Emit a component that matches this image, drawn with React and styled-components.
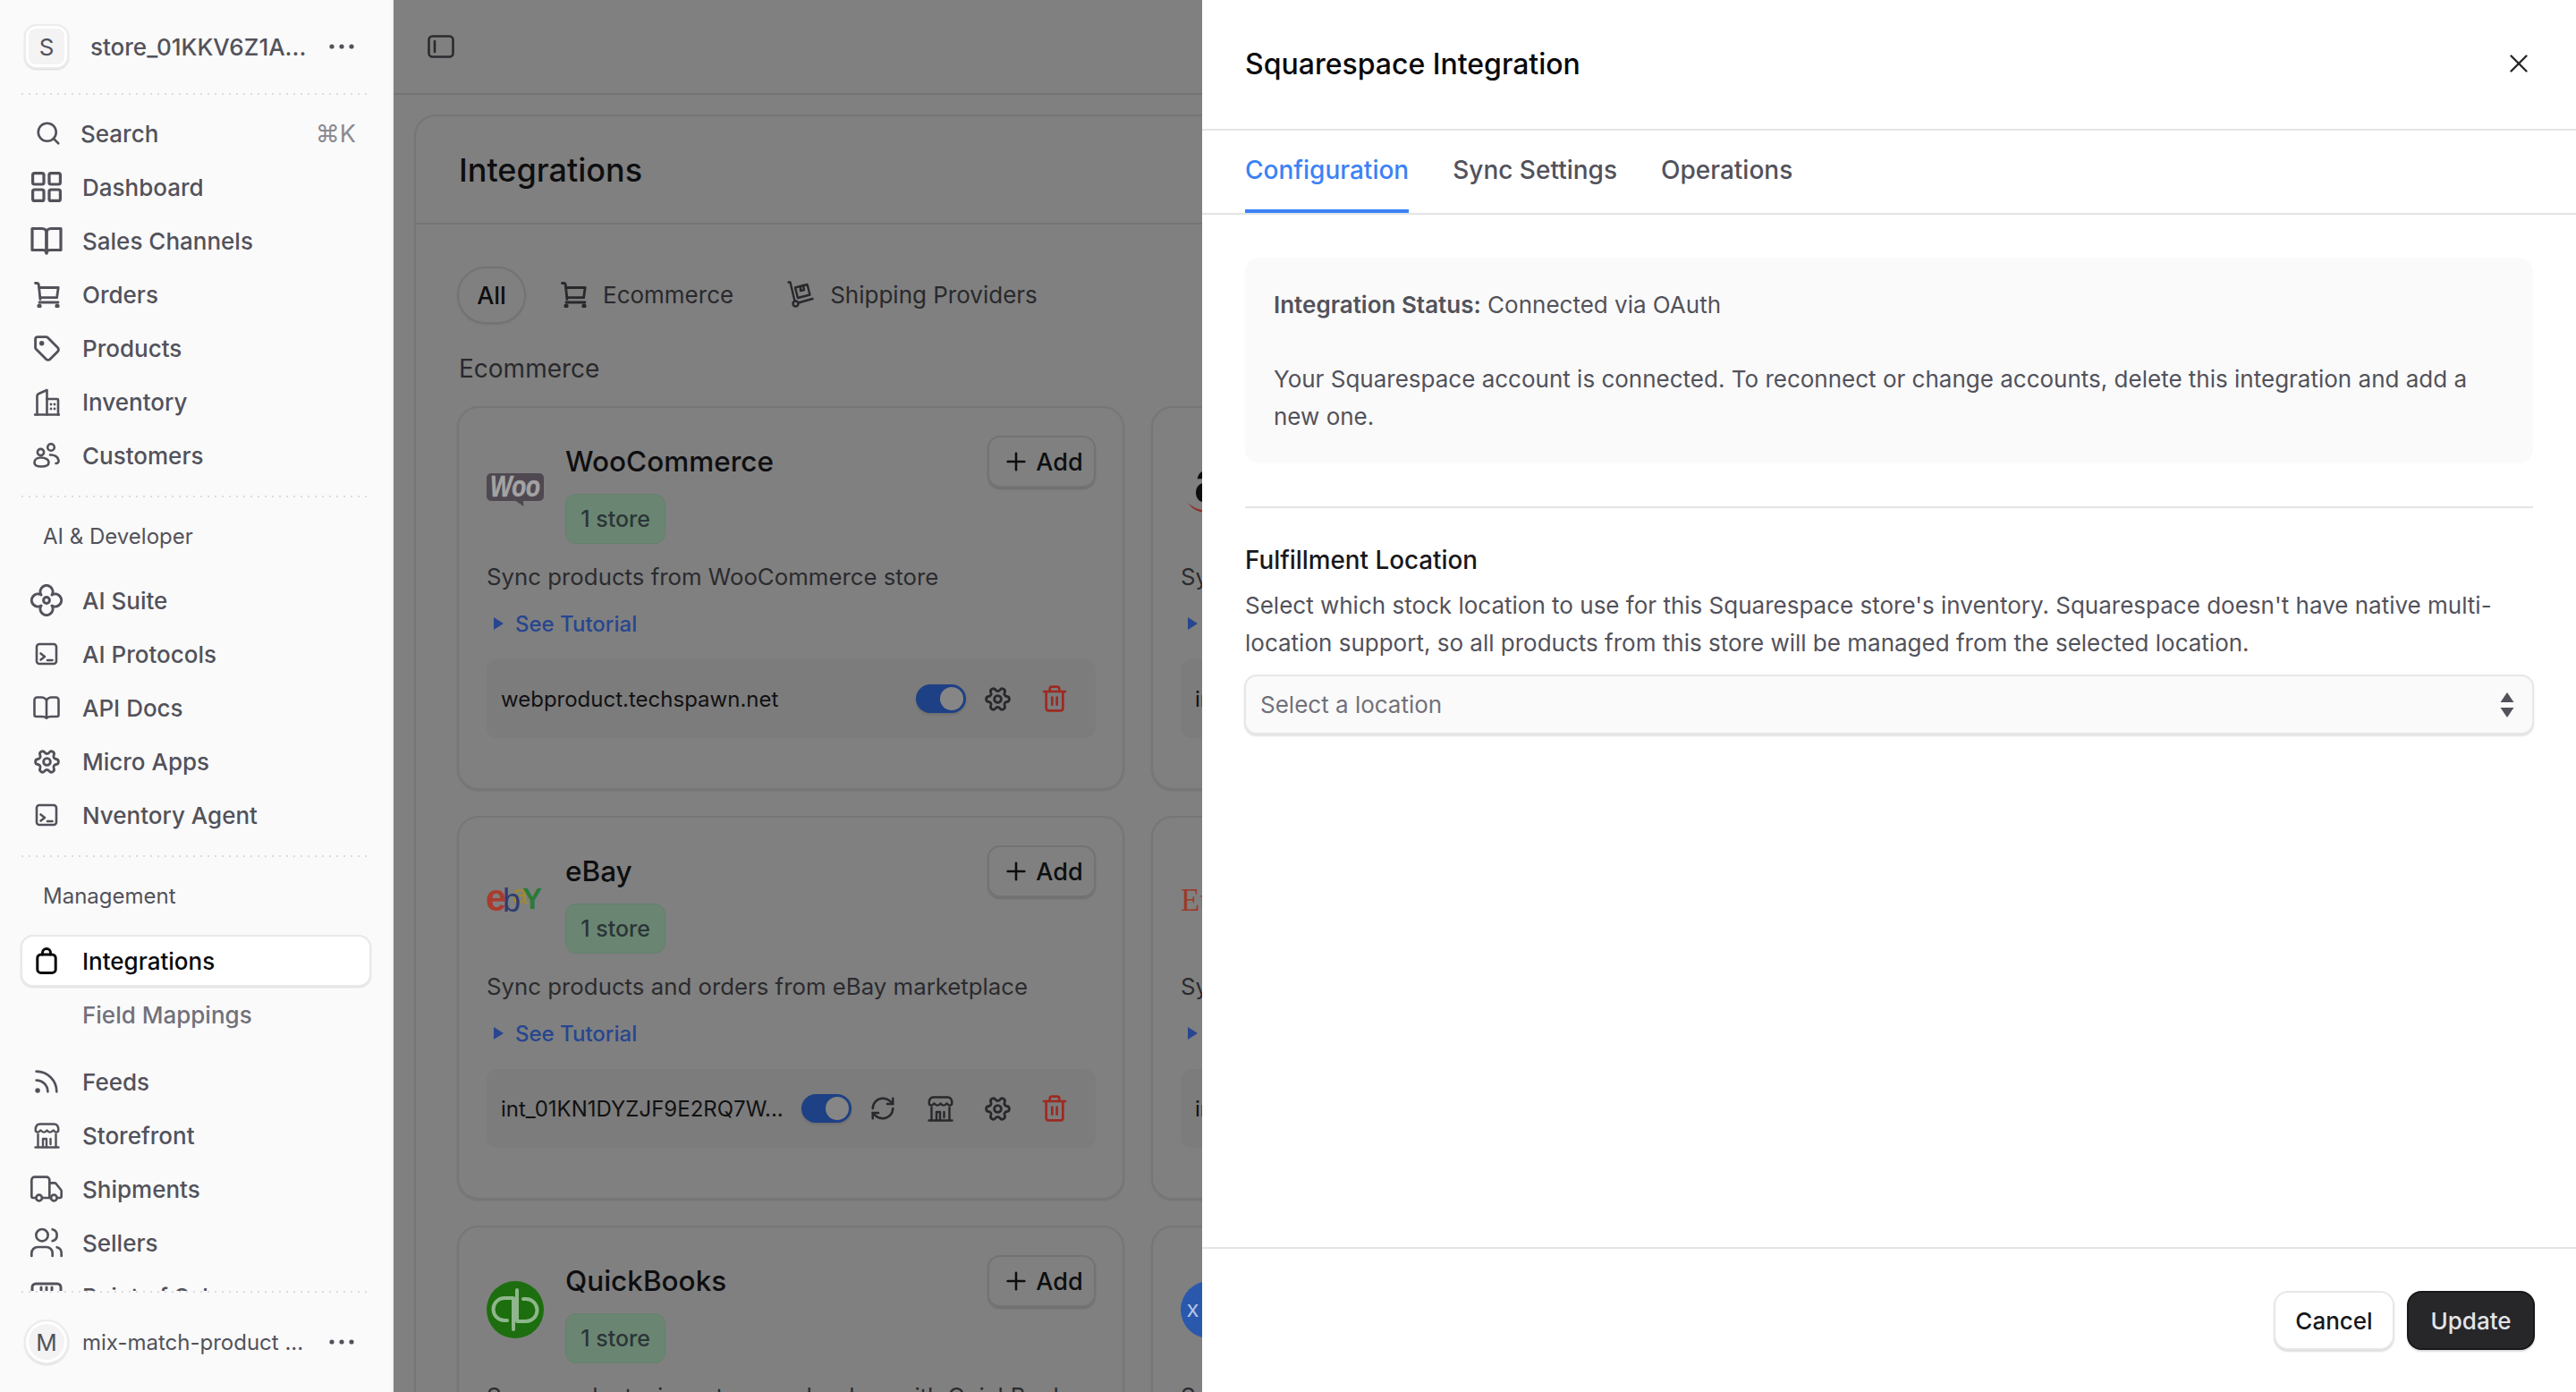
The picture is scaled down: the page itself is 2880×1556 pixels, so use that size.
import React from 'react';
import styled, { createGlobalStyle } from 'styled-components';
import { Plus, RefreshCw, Rss, Search, Settings, Trash2, Truck, Users, X } from 'lucide-react';

const GlobalStyle = createGlobalStyle`
  html, body {
    margin: 0;
    padding: 0;
    height: 100%;
    font-family: Inter, "Liberation Sans", sans-serif;
    -webkit-font-smoothing: antialiased;
  }
  * { box-sizing: border-box; }
`;

const Page = styled.div`
  display: flex;
  width: 2880px;
  height: 1556px;
  overflow: hidden;
  background: #808080;
`;

/* sidebar */

const Sidebar = styled.aside`
  display: flex;
  flex-direction: column;
  flex: 0 0 440px;
  width: 440px;
  min-width: 0;
  height: 100%;
  background: #fafafa;
  border-right: 2px solid #f1f1f2;
`;

const DottedLine = styled.div`
  flex: none;
  height: 2px;
  margin: 0 28px 0 24px;
  background-image: linear-gradient(to right, #dcdcde 2px, transparent 2px);
  background-size: 8px 2px;
`;

const SideTop = styled.div`
  display: flex;
  align-items: flex-start;
  flex: none;
  height: 104px;
  padding: 27px 41px 0 27px;
`;

const SideBottom = styled.div`
  display: flex;
  align-items: flex-start;
  flex: none;
  height: 111px;
  padding: 30px 41px 0 27px;
`;

const Avatar = styled.div`
  display: flex;
  align-items: center;
  justify-content: center;
  flex: none;
  width: 50px;
  height: 50px;
  border-radius: ${(p) => (p.$round ? '50%' : '14px')};
  background: #fff;
  border: 2px solid #ececee;
  box-shadow: 0 1px 2px rgba(0, 0, 0, 0.14);
  span {
    display: flex;
    align-items: center;
    justify-content: center;
    width: 40px;
    height: 40px;
    border-radius: ${(p) => (p.$round ? '50%' : '8px')};
    background: #f3f3f4;
    color: #52525b;
    font-size: 26px;
  }
`;

const AccountRow = styled.div`
  display: flex;
  align-items: center;
  width: 100%;
  height: 50px;
`;

const AccountName = styled.div`
  flex: 1;
  min-width: 0;
  margin-left: ${(p) => p.$indent}px;
  color: #52525b;
  font-size: ${(p) => p.$size}px;
  font-weight: ${(p) => p.$weight};
  white-space: nowrap;
`;

const Nav = styled.nav`
  flex: 1;
  min-height: 0;
  overflow: hidden;
  padding: 14px 23px 0;
  display: flex;
  flex-direction: column;
`;

const NavGroup = styled.div`
  display: flex;
  flex: none;
  flex-direction: column;
  gap: 2px;
  margin-top: ${(p) => p.$top || 0}px;
`;

const NavItem = styled.div`
  display: flex;
  align-items: center;
  flex: none;
  height: 58px;
  padding-left: 9px;
  border-radius: 14px;
  border: 2px solid ${(p) => (p.$active ? '#e9e9eb' : 'transparent')};
  background: ${(p) => (p.$active ? '#fff' : 'transparent')};
  box-shadow: ${(p) => (p.$active ? '0 1px 2px rgba(0,0,0,.12)' : 'none')};
  color: ${(p) => (p.$active ? '#09090b' : p.$muted ? '#71717a' : '#52525b')};
  font-size: 26px;
  font-weight: 500;
`;

const NavIcon = styled.span`
  display: flex;
  align-items: center;
  justify-content: center;
  flex: none;
  width: 40px;
  margin-right: ${(p) => p.$gap || 20}px;
  margin-left: -2px;
`;

const SearchItem = styled(NavItem)`
  padding-right: 15px;
  justify-content: space-between;
`;

const SearchLabel = styled.span`
  display: flex;
  align-items: center;
`;

const Shortcut = styled.span`
  color: #8a8a92;
  font-size: 27px;
  font-weight: 400;
`;

const NavSection = styled.div`
  flex: none;
  height: 40px;
  margin: 24px 0 ${(p) => p.$after}px;
  padding-left: 25px;
  color: #52525b;
  font-size: 24px;
  font-weight: 400;
  line-height: 40px;
`;

const NavDivider = styled(DottedLine)`
  margin: 16px 5px 0 1px;
`;

/* main, behind the drawer */

const Main = styled.main`
  flex: 1;
  min-width: 0;
  overflow: hidden;
  display: flex;
  flex-direction: column;
`;

const TopBar = styled.div`
  display: flex;
  align-items: center;
  flex: none;
  height: 106px;
  padding-left: 38px;
  border-bottom: 2px solid #747474;
  color: #2b2b2f;
`;

const ContentWrap = styled.div`
  flex: none;
  width: 1700px;
  margin: 22px 0 0 23px;
  border: 2px solid #757575;
  border-bottom: 0;
  border-radius: 24px 24px 0 0;
`;

const ContentHead = styled.div`
  display: flex;
  align-items: center;
  height: 121px;
  padding-left: 48px;
  border-bottom: 2px solid #747474;
  color: #0e0e10;
  font-size: 36px;
  font-weight: 500;
`;

const ContentBody = styled.div`
  padding: 47px 46px 0;
`;

const FilterRow = styled.div`
  display: flex;
  align-items: center;
  height: 64px;
`;

const FilterPill = styled.div`
  display: flex;
  align-items: center;
  justify-content: center;
  width: 77px;
  height: 64px;
  border-radius: 32px;
  border: 2px solid #737373;
  box-shadow: 0 1px 2px rgba(0, 0, 0, 0.1);
  color: #0e0e10;
  font-size: 27px;
  font-weight: 500;
`;

const FilterTab = styled.div`
  display: flex;
  align-items: center;
  gap: 18px;
  margin-left: ${(p) => p.$left}px;
  padding-bottom: 2px;
  color: #29292d;
  font-size: 26px;
`;

const SectionTitle = styled.div`
  height: 40px;
  margin: 30px 0 22px 2px;
  color: #29292d;
  font-size: 28px;
  line-height: 40px;
`;

const CardGrid = styled.div`
  display: grid;
  grid-template-columns: 746px 746px;
  grid-auto-rows: 429px;
  gap: 29px 30px;
`;

const Card = styled.div`
  position: relative;
  padding: 31px 30px 0 31px;
  border: 2px solid #767676;
  border-radius: 24px;
  box-shadow: 0 1px 2px rgba(0, 0, 0, 0.12);
`;

const CardHead = styled.div`
  display: flex;
  align-items: center;
  gap: 24px;
`;

const LogoBox = styled.div`
  display: flex;
  align-items: center;
  justify-content: center;
  flex: none;
  width: 64px;
  height: 64px;
`;

const CardHeadText = styled.div`
  flex: 1;
  min-width: 0;
`;

const CardTitleRow = styled.div`
  display: flex;
  align-items: center;
  justify-content: space-between;
  height: 58px;
`;

const CardTitle = styled.div`
  padding-bottom: 2px;
  color: #0e0e10;
  font-size: 31.5px;
  font-weight: 500;
`;

const AddButton = styled.div`
  display: flex;
  align-items: center;
  justify-content: center;
  gap: 6px;
  width: 121px;
  height: 58px;
  padding-left: 2px;
  border-radius: 14px;
  border: 2px solid #737373;
  box-shadow: 0 2px 2px rgba(0, 0, 0, 0.14);
  color: #0e0e10;
  font-size: 27px;
  font-weight: 500;
`;

const StoreBadge = styled.div`
  display: flex;
  align-items: center;
  justify-content: center;
  width: 112px;
  height: 56px;
  margin-top: 7px;
  border-radius: 12px;
  border: 1px solid #64806c;
  background: #6a8672;
  color: #2b3538;
  font-size: 25px;
  font-weight: 500;
`;

const CardDesc = styled.div`
  height: 42px;
  margin-top: 16px;
  color: #2b2b2f;
  font-size: 25.8px;
  line-height: 42px;
  white-space: nowrap;
`;

const Tutorial = styled.div`
  display: flex;
  align-items: center;
  height: 40px;
  margin: 11px 0 20px;
  padding-left: 8px;
  color: #27468f;
  font-size: 24px;
  font-weight: 500;
  &::before {
    content: '';
    width: 0;
    height: 0;
    margin-right: 13px;
    border-left: 11px solid #27468f;
    border-top: 7px solid transparent;
    border-bottom: 7px solid transparent;
  }
`;

const ConnectionRow = styled.div`
  display: flex;
  align-items: center;
  height: 88px;
  padding: 0 14px 0 16px;
  border-radius: 12px;
  background: #7c7c7c;
`;

const ConnectionName = styled.div`
  flex: 1;
  min-width: 0;
  color: #111113;
  font-size: 24px;
  white-space: nowrap;
`;

const Toggle = styled.div`
  display: flex;
  align-items: center;
  justify-content: flex-end;
  flex: none;
  width: 56px;
  height: 32px;
  padding-right: 3px;
  margin-right: 3px;
  border-radius: 16px;
  background: #1e4085;
  box-shadow: 0 2px 3px rgba(0, 0, 0, 0.12);
  &::after {
    content: '';
    width: 26px;
    height: 26px;
    border-radius: 50%;
    background: #868686;
  }
`;

const RowIcon = styled.div`
  display: flex;
  align-items: center;
  justify-content: center;
  flex: none;
  width: 64px;
  color: ${(p) => (p.$danger ? '#9c2a22' : '#29292d')};
`;

/* drawer */

const Drawer = styled.section`
  display: flex;
  flex-direction: column;
  flex: 0 0 1536px;
  height: 100%;
  background: #fff;
`;

const DrawerHead = styled.header`
  display: flex;
  align-items: center;
  justify-content: space-between;
  flex: none;
  height: 146px;
  padding: 0 47px 2px 48px;
  border-bottom: 2px solid #e4e4e7;
  color: #09090b;
  font-size: 32px;
  font-weight: 500;
`;

const CloseIcon = styled.span`
  display: flex;
  color: #27272a;
`;

const TabBar = styled.div`
  display: flex;
  flex: none;
  gap: 49px;
  height: 94px;
  padding: 0 48px;
  border-bottom: 2px solid #e4e4e7;
`;

const Tab = styled.div`
  display: flex;
  align-items: center;
  height: 92px;
  border-bottom: 4px solid ${(p) => (p.$active ? '#3b82f6' : 'transparent')};
  color: ${(p) => (p.$active ? '#3b82f6' : '#52525b')};
  font-size: 28px;
  font-weight: 500;
`;

const DrawerBody = styled.div`
  flex: 1;
  min-height: 0;
  padding: 48px;
`;

const StatusBox = styled.div`
  padding: 32px 32px 31px;
  border-radius: 16px;
  background: #fafafa;
  color: #52525b;
  font-size: 26px;
  line-height: 42px;
  strong { font-weight: 600; }
  p { margin: 0; }
  p + p { margin-top: 41px; }
`;

const Rule = styled.div`
  height: 2px;
  margin: 48px 0 37px;
  background: #e4e4e7;
`;

const FieldLabel = styled.div`
  height: 42px;
  color: #18181b;
  font-size: 27.8px;
  font-weight: 450;
  line-height: 42px;
`;

const FieldHelp = styled.div`
  margin-top: 9px;
  color: #52525b;
  font-size: 26px;
  line-height: 42px;
`;

const SelectBox = styled.div`
  display: flex;
  align-items: center;
  justify-content: space-between;
  height: 67px;
  margin: 14px -1px 0;
  padding: 0 19px 0 16px;
  border-radius: 14px;
  border: 2px solid #e7e7e9;
  background: #fafafa;
  box-shadow: 0 2px 2px rgba(0, 0, 0, 0.12);
  color: #71717a;
  font-size: 26px;
`;

const DrawerFoot = styled.footer`
  display: flex;
  justify-content: flex-end;
  flex: none;
  gap: 14px;
  height: 162px;
  padding: 47px 46px 0 0;
  border-top: 2px solid #e4e4e7;
`;

const FootButton = styled.div`
  display: flex;
  align-items: center;
  justify-content: center;
  width: ${(p) => p.$width}px;
  height: 66px;
  border-radius: 16px;
  border: 2px solid ${(p) => (p.$primary ? '#18181b' : '#e7e7e9')};
  background: ${(p) => (p.$primary ? '#27272a' : '#fff')};
  box-shadow: 0 2px 2px rgba(0, 0, 0, 0.14);
  color: ${(p) => (p.$primary ? '#e4e4e7' : '#18181b')};
  font-size: 26px;
  font-weight: 500;
`;

/* drawings */

const Glyph = styled.svg`
  display: block;
  flex: none;
  fill: none;
  stroke: currentColor;
  stroke-width: ${(p) => p.$weight || 2.8}px;
  stroke-linecap: round;
  stroke-linejoin: round;
`;

const Dots = () => (
  <Glyph width="30" height="8" viewBox="0 0 30 8" style={{ stroke: 'none', fill: '#52525b' }}>
    <circle cx="4" cy="4" r="2.6" />
    <circle cx="15" cy="4" r="2.6" />
    <circle cx="26" cy="4" r="2.6" />
  </Glyph>
);

const GridIcon = () => (
  <Glyph width="34" height="34" viewBox="0 0 34 34" $weight={3.2}>
    <rect x="1.6" y="1.6" width="12.4" height="12.4" rx="2" />
    <rect x="20" y="1.6" width="12.4" height="12.4" rx="2" />
    <rect x="1.6" y="20" width="12.4" height="12.4" rx="2" />
    <rect x="20" y="20" width="12.4" height="12.4" rx="2" />
  </Glyph>
);

const BookIcon = () => (
  <Glyph width="36" height="33" viewBox="0 0 36 33" $weight={3.2}>
    <path d="M2 2.5h11c3 0 5 2 5 5V30c0-2-2-3.5-4-3.5H2z" />
    <path d="M34 2.5H23c-3 0-5 2-5 5V30c0-2 2-3.5 4-3.5h12z" />
  </Glyph>
);

const CartIcon = ({ size = 29 }) => (
  <Glyph width={size} height={size} viewBox="0 0 29 29">
    <path d="M1.5 1.5H3c1.3 0 2.1.7 2.3 2L7 19.5" />
    <path d="M5.6 6.5h21.6l-1.6 11.2H7" />
    <path d="M6 23h21" />
    <circle cx="6" cy="27" r="1.2" fill="currentColor" />
    <circle cx="26" cy="27" r="1.2" fill="currentColor" />
  </Glyph>
);

const TagIcon = () => (
  <Glyph width="31" height="31" viewBox="0 0 24 24" $weight={2.2}>
    <path d="M12.586 2.586A2 2 0 0 0 11.172 2H4a2 2 0 0 0-2 2v7.172a2 2 0 0 0 .586 1.414l8.704 8.704a2.426 2.426 0 0 0 3.42 0l6.58-6.58a2.426 2.426 0 0 0 0-3.42z" />
    <circle cx="7.5" cy="7.5" r="1" fill="currentColor" />
  </Glyph>
);

const BuildingIcon = () => (
  <Glyph width="29" height="31" viewBox="0 0 29 31" $weight={2.6}>
    <path d="M1 29.5h27" />
    <path d="M3.5 29.5V9c0-1.5.7-2.5 2-3l9-4v10" />
    <path d="M14.5 12H26a1 1 0 0 1 1 1v16.5" />
    <path d="M14.5 12v17.5" />
    <g fill="currentColor" stroke="none">
      <circle cx="19" cy="18" r="1.4" />
      <circle cx="23" cy="18" r="1.4" />
      <circle cx="19" cy="23" r="1.4" />
      <circle cx="23" cy="23" r="1.4" />
    </g>
  </Glyph>
);

const CustomersIcon = () => (
  <Glyph width="30" height="28" viewBox="0 0 30 28" $weight={2.6}>
    <circle cx="8.5" cy="10.5" r="3.6" />
    <circle cx="20" cy="5" r="3.8" />
    <path d="M1.5 22c0-3.6 3.6-5.5 7.5-5.5s8.5 2 8.5 5.5-4.5 4.5-8.5 4.5-7.5-1-7.5-4.5z" />
    <path d="M19 13.500c4.500-.5 9 2 9.500 6.500.2 1.800-1 3-3 3" />
  </Glyph>
);

const CloverIcon = () => (
  <Glyph width="36" height="36" viewBox="0 0 36 36" $weight={3}>
    <path d="M12 12A7 7 0 1 1 24 12A7 7 0 1 1 24 24A7 7 0 1 1 12 24A7 7 0 1 1 12 12Z" />
    <circle cx="18" cy="18" r="3.4" />
  </Glyph>
);

const TerminalIcon = () => (
  <Glyph width="26" height="26" viewBox="0 0 26 26" $weight={2.6}>
    <rect x="2" y="2" width="22" height="22" rx="3" />
    <path d="M6.500 12.500l4.500 3.500-4.500 3.500" />
    <path d="M14 20h5.500" />
  </Glyph>
);

const DocsIcon = () => (
  <Glyph width="30" height="26" viewBox="0 0 30 26" $weight={2.6}>
    <path d="M15 4.500c-1.500-2-3.500-3-5.500-3h-5a3 3 0 0 0-3 3V21a2 2 0 0 0 2 2H9.500c2.200 0 4.500.5 5.500 1.800 1-1.300 3.300-1.800 5.500-1.800h6a2 2 0 0 0 2-2V4.500a3 3 0 0 0-3-3h-5c-2 0-4 1-5.500 3z" />
    <path d="M15 4.500v20" />
  </Glyph>
);

const Gear = ({ size = 31 }) => (
  <Settings size={size} strokeWidth={2.2} style={{ transform: 'rotate(90deg)' }} />
);

const StoreIcon = () => (
  <Glyph width="29" height="29" viewBox="0 0 29 29" $weight={2.4}>
    <path d="M1.700 8c0-4 2-6.500 5-6.500h15.600c3 0 5 2.500 5 6.500 0 1.600-1 2.600-2.500 2.600-2 0-2.700-2.100-3.200-2.100s-1.500 2.100-3.800 2.100-3.200-2.100-3.300-2.100-1 2.100-3.300 2.100-3.300-2.100-3.800-2.100-1.200 2.100-3.200 2.100C2.700 10.600 1.700 9.600 1.700 8z" />
    <path d="M4.500 13v14.500M24.500 13v14.500M1.500 27.500h26" />
    <path d="M10 27V18h4v9M18.500 18v6" />
  </Glyph>
);

const BagIcon = () => (
  <Glyph width="24" height="30" viewBox="0 0 24 30" $weight={3}>
    <rect x="1.800" y="8" width="20.400" height="20.400" rx="4" />
    <path d="M7.500 8V6a4.500 4.500 0 0 1 9 0v2" />
  </Glyph>
);

const MonitorIcon = () => (
  <Glyph width="36" height="32" viewBox="0 0 36 32" $weight={3}>
    <rect x="2" y="2" width="32" height="28" rx="4" />
    <path d="M12 6v3M18 6v3M24 6v3" />
  </Glyph>
);

const PanelIcon = () => (
  <Glyph width="30" height="26" viewBox="0 0 30 26" $weight={2.6}>
    <rect x="1.500" y="1.500" width="27" height="23" rx="4" />
    <path d="M8 7v12" />
  </Glyph>
);

const HandTruckIcon = () => (
  <Glyph width="30" height="30" viewBox="0 0 30 30" $weight={2.4}>
    <path d="M1.500 1.500h2l5 21" />
    <circle cx="9.500" cy="25.500" r="3" />
    <path d="M12.500 24.500l16-4.500" />
    <path d="M9 7.500L22.500 4l3 11.500-13.500 3.500z" />
    <path d="M15 6v5l4-1-1-5" />
  </Glyph>
);

const SortIcon = () => (
  <Glyph width="18" height="30" viewBox="0 0 18 30" style={{ stroke: 'none', fill: '#52525b' }}>
    <path d="M9 1l7.500 11h-15z" />
    <path d="M9 29L1.500 18h15z" />
  </Glyph>
);

const WooLogo = () => (
  <svg width="64" height="37" viewBox="0 0 64 37">
    <path
      d="M5 0h54a5 5 0 0 1 5 5v21a5 5 0 0 1-5 5H41l.5 6-9-6H5a5 5 0 0 1-5-5V5a5 5 0 0 1 5-5z"
      fill="#4f4851"
    />
    <text
      x="32"
      y="26"
      textAnchor="middle"
      textLength="56"
      lengthAdjust="spacingAndGlyphs"
      fill="#a3a3a3"
      stroke="#a3a3a3"
      strokeWidth="0.6"
      fontFamily="'Liberation Sans', sans-serif"
      fontSize="33"
      fontStyle="italic"
      fontWeight="700"
    >
      Woo
    </text>
  </svg>
);

const EbayLogo = () => (
  <svg width="64" height="32" viewBox="0 0 64 32" fontFamily="'Liberation Sans', sans-serif">
    <text x="29" y="20" fill="#a08a30" fontSize="30">a</text>
    <text x="-1" y="28" fill="#a83c2e" fontSize="42" fontWeight="700">e</text>
    <text x="18" y="29" fill="#2f3c6e" fontSize="36">b</text>
    <text x="40" y="26" fill="#2c7a38" fontSize="33" fontWeight="700">Y</text>
  </svg>
);

const QuickBooksLogo = () => (
  <svg width="64" height="64" viewBox="0 0 64 64" fill="none" stroke="#8fb68c" strokeWidth="4" strokeLinecap="round">
    <circle cx="32" cy="32" r="32" fill="#1d6e0e" stroke="none" />
    <path d="M30 19H20a12.500 12.500 0 0 0 0 25h3M30 19v35" />
    <path d="M34 45h10a12.500 12.500 0 0 0 0-25h-3M34 45V10" />
  </svg>
);

const AmazonLogo = () => (
  <svg width="64" height="64" viewBox="0 0 64 64">
    <text x="15" y="45" fill="#0e0e10" fontFamily="'Liberation Sans', sans-serif" fontSize="68" fontWeight="700">a</text>
    <path d="M8 46c8 8 22 11 34 7-10 7-26 5-34-7z" fill="#8f2f22" />
  </svg>
);

const EtsyLogo = () => (
  <svg width="64" height="64" viewBox="0 0 64 64">
    <text x="0" y="44" fill="#9d3a2a" fontFamily="'Liberation Serif', serif" fontSize="35">Etsy</text>
  </svg>
);

const XeroLogo = () => (
  <svg width="64" height="64" viewBox="0 0 64 64">
    <circle cx="32" cy="32" r="32" fill="#2a58ad" />
    <text x="7" y="40" letterSpacing="6" fill="#b4c6e4" fontFamily="'Liberation Sans', sans-serif" fontSize="26">xero</text>
  </svg>
);

/* data */

const mainItems = [
  ['Dashboard', <GridIcon />],
  ['Sales Channels', <BookIcon />],
  ['Orders', <CartIcon />],
  ['Products', <TagIcon />],
  ['Inventory', <BuildingIcon />],
  ['Customers', <CustomersIcon />],
];

const devItems = [
  ['AI Suite', <CloverIcon />],
  ['AI Protocols', <TerminalIcon />],
  ['API Docs', <DocsIcon />],
  ['Micro Apps', <Gear />],
  ['Nventory Agent', <TerminalIcon />],
];

const manageItems = [
  ['Feeds', <Rss size={34} strokeWidth={1.9} />],
  ['Storefront', <StoreIcon />],
  ['Shipments', <Truck size={44} strokeWidth={1.6} />],
  ['Sellers', <Users size={44} strokeWidth={1.6} />],
  ['Point of Sale', <MonitorIcon />],
];

const iconsBasic = ['gear', 'trash'];
const iconsFull = ['sync', 'store', 'gear', 'trash'];

const integrations = [
  {
    title: 'WooCommerce',
    logo: <WooLogo />,
    desc: 'Sync products from WooCommerce store',
    connection: 'webproduct.techspawn.net',
    actions: iconsBasic,
  },
  {
    title: 'Amazon',
    logo: <AmazonLogo />,
    desc: 'Sync products and orders from Amazon',
    connection: 'int_01KN1DYZAMZ',
    actions: iconsBasic,
  },
  {
    title: 'eBay',
    logo: <EbayLogo />,
    desc: 'Sync products and orders from eBay marketplace',
    connection: 'int_01KN1DYZJF9E2RQ7W...',
    actions: iconsFull,
  },
  {
    title: 'Etsy',
    logo: <EtsyLogo />,
    desc: 'Sync products and orders from Etsy',
    connection: 'int_01KN1DYETSY',
    actions: iconsBasic,
  },
  {
    title: 'QuickBooks',
    logo: <QuickBooksLogo />,
    desc: 'Sync products, inventory, and orders with QuickBooks',
    connection: 'int_01KN1DYZQBO',
    actions: iconsBasic,
  },
  {
    title: 'Xero',
    logo: <XeroLogo />,
    desc: 'Sync products and invoices with Xero',
    connection: 'int_01KN1DYXERO',
    actions: iconsBasic,
  },
];

const rowIcon = (name) => {
  if (name === 'sync') return <RefreshCw size={30} strokeWidth={2} />;
  if (name === 'store') return <StoreIcon />;
  if (name === 'gear') return <Gear />;
  return <Trash2 size={32} strokeWidth={2} />;
};

const renderNav = (items) =>
  items.map(([label, icon]) => (
    <NavItem key={label}>
      <NavIcon>{icon}</NavIcon>
      {label}
    </NavItem>
  ));

const IntegrationCard = ({ item }) => (
  <Card>
    <CardHead>
      <LogoBox>{item.logo}</LogoBox>
      <CardHeadText>
        <CardTitleRow>
          <CardTitle>{item.title}</CardTitle>
          <AddButton>
            <Plus size={32} strokeWidth={1.9} />
            Add
          </AddButton>
        </CardTitleRow>
        <StoreBadge>1 store</StoreBadge>
      </CardHeadText>
    </CardHead>
    <CardDesc>{item.desc}</CardDesc>
    <Tutorial>See Tutorial</Tutorial>
    <ConnectionRow>
      <ConnectionName>{item.connection}</ConnectionName>
      <Toggle />
      {item.actions.map((name) => (
        <RowIcon key={name} $danger={name === 'trash'}>
          {rowIcon(name)}
        </RowIcon>
      ))}
    </ConnectionRow>
  </Card>
);

export default function App() {
  return (
    <>
      <GlobalStyle />
      <Page>
        <Sidebar>
          <SideTop>
            <AccountRow>
              <Avatar>
                <span>S</span>
              </Avatar>
              <AccountName $indent={24} $size={26} $weight={500}>
                store_01KKV6Z1A...
              </AccountName>
              <Dots />
            </AccountRow>
          </SideTop>
          <DottedLine />
          <Nav>
            <NavGroup>
              <SearchItem>
                <SearchLabel>
                  <NavIcon $gap={18}>
                    <Search size={30} strokeWidth={2.1} style={{ marginLeft: 4 }} />
                  </NavIcon>
                  Search
                </SearchLabel>
                <Shortcut>⌘K</Shortcut>
              </SearchItem>
              {renderNav(mainItems)}
            </NavGroup>
            <NavDivider />
            <NavSection $after={22}>AI &amp; Developer</NavSection>
            <NavGroup>{renderNav(devItems)}</NavGroup>
            <NavDivider />
            <NavSection $after={23}>Management</NavSection>
            <NavGroup>
              <NavItem $active>
                <NavIcon>
                  <BagIcon />
                </NavIcon>
                Integrations
              </NavItem>
              <NavItem $muted>
                <NavIcon />
                Field Mappings
              </NavItem>
            </NavGroup>
            <NavGroup $top={17}>{renderNav(manageItems)}</NavGroup>
          </Nav>
          <DottedLine />
          <SideBottom>
            <AccountRow>
              <Avatar $round>
                <span>M</span>
              </Avatar>
              <AccountName $indent={15} $size={24} $weight={400}>
                mix-match-product ...
              </AccountName>
              <Dots />
            </AccountRow>
          </SideBottom>
        </Sidebar>

        <Main>
          <TopBar>
            <PanelIcon />
          </TopBar>
          <ContentWrap>
            <ContentHead>Integrations</ContentHead>
            <ContentBody>
              <FilterRow>
                <FilterPill>All</FilterPill>
                <FilterTab $left={39}>
                  <CartIcon />
                  Ecommerce
                </FilterTab>
                <FilterTab $left={60}>
                  <HandTruckIcon />
                  Shipping Providers
                </FilterTab>
              </FilterRow>
              <SectionTitle>Ecommerce</SectionTitle>
              <CardGrid>
                {integrations.map((item) => (
                  <IntegrationCard key={item.title} item={item} />
                ))}
              </CardGrid>
            </ContentBody>
          </ContentWrap>
        </Main>

        <Drawer>
          <DrawerHead>
            Squarespace Integration
            <CloseIcon>
              <X size={34} strokeWidth={1.7} />
            </CloseIcon>
          </DrawerHead>
          <TabBar>
            <Tab $active>Configuration</Tab>
            <Tab>Sync Settings</Tab>
            <Tab>Operations</Tab>
          </TabBar>
          <DrawerBody>
            <StatusBox>
              <p>
                <strong>Integration Status:</strong> Connected via OAuth
              </p>
              <p>
                Your Squarespace account is connected. To reconnect or change accounts, delete this
                integration and add a new one.
              </p>
            </StatusBox>
            <Rule />
            <FieldLabel>Fulfillment Location</FieldLabel>
            <FieldHelp>
              Select which stock location to use for this Squarespace store's inventory. Squarespace
              doesn't have native multi-location support, so all products from this store will be
              managed from the selected location.
            </FieldHelp>
            <SelectBox>
              Select a location
              <SortIcon />
            </SelectBox>
          </DrawerBody>
          <DrawerFoot>
            <FootButton $width={135}>Cancel</FootButton>
            <FootButton $primary $width={143}>
              Update
            </FootButton>
          </DrawerFoot>
        </Drawer>
      </Page>
    </>
  );
}
